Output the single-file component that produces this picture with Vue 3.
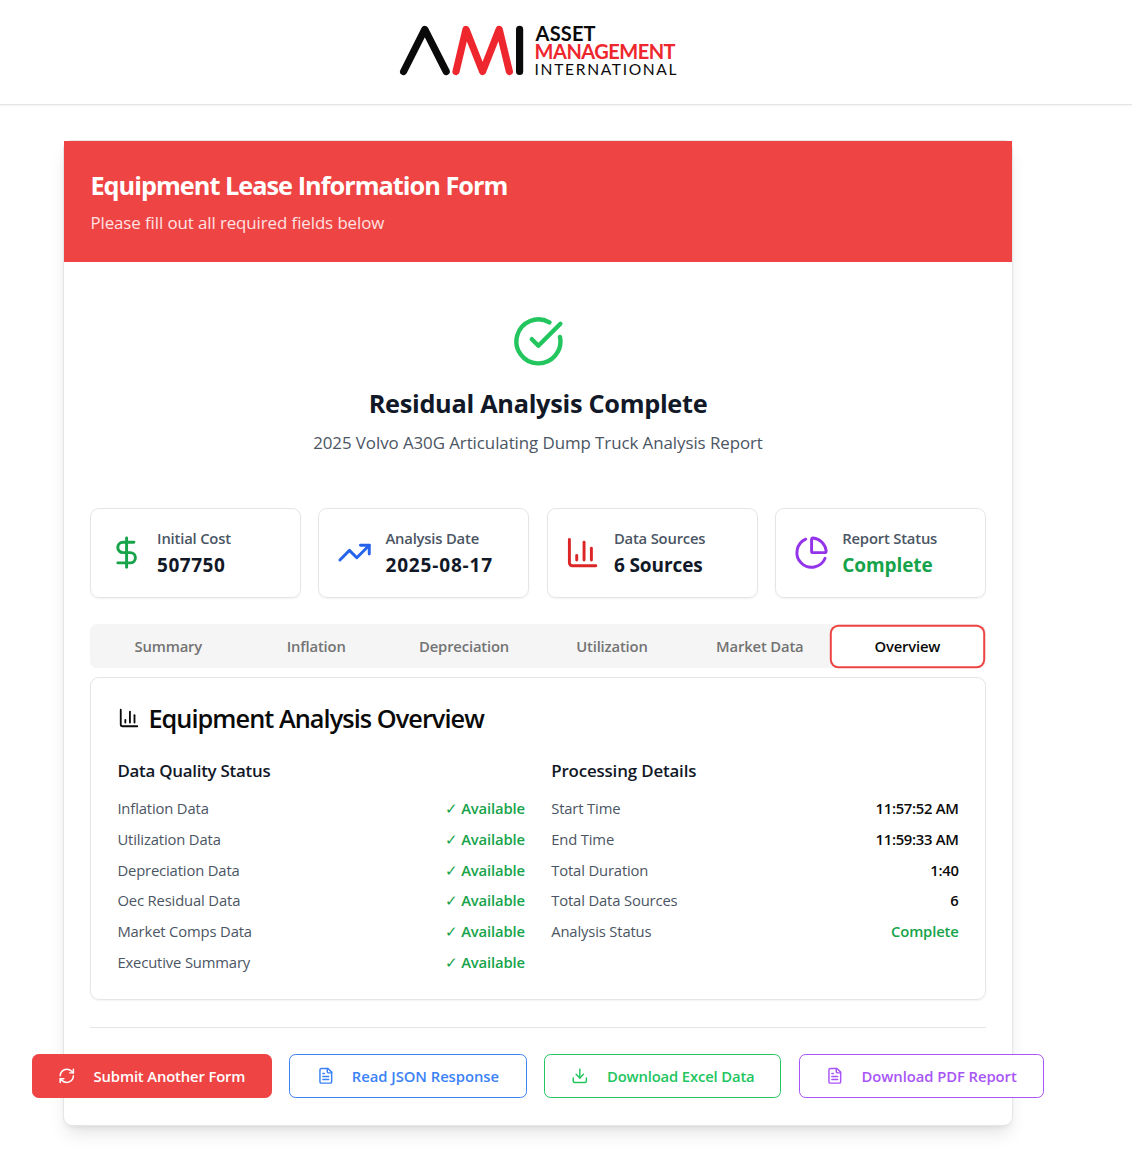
<script setup>
const icons = {
  check: ['M21.801 10A10 10 0 1 1 17 3.335', 'm9 11 3 3L22 4'],
  dollar: ['M12 2v20', 'M17 5H9.5a3.5 3.5 0 0 0 0 7h5a3.5 3.5 0 0 1 0 7H6'],
  trend: ['M22 7l-8.5 8.5-5-5L2 17', 'M16 7h6v6'],
  chart: ['M3 3v16a2 2 0 0 0 2 2h16', 'M18 17V9', 'M13 17V5', 'M8 17v-3'],
  pie: [
    'M21 12c.552 0 1.005-.449.95-.998a10 10 0 0 0-8.953-8.951c-.55-.055-.998.398-.998.95v8a1 1 0 0 0 1 1z',
    'M21.21 15.89A10 10 0 1 1 8 2.83',
  ],
  refresh: [
    'M3 12a9 9 0 0 1 9-9 9.75 9.75 0 0 1 6.74 2.74L21 8',
    'M21 3v5h-5',
    'M21 12a9 9 0 0 1-9 9 9.75 9.75 0 0 1-6.74-2.74L3 16',
    'M8 16H3v5',
  ],
  file: [
    'M15 2H6a2 2 0 0 0-2 2v16a2 2 0 0 0 2 2h12a2 2 0 0 0 2-2V7Z',
    'M14 2v4a2 2 0 0 0 2 2h4',
    'M10 9H8',
    'M16 13H8',
    'M16 17H8',
  ],
  download: ['M21 15v4a2 2 0 0 1-2 2H5a2 2 0 0 1-2-2v-4', 'M7 10l5 5 5-5', 'M12 15V3'],
}

const stats = [
  { label: 'Initial Cost', value: '507750', icon: 'dollar', tone: 'green', kind: 'digits' },
  { label: 'Analysis Date', value: '2025-08-17', icon: 'trend', tone: 'blue', kind: 'date' },
  { label: 'Data Sources', value: '6 Sources', icon: 'chart', tone: 'red', kind: '' },
  { label: 'Report Status', value: 'Complete', icon: 'pie', tone: 'purple', kind: 'good' },
]

const tabs = ['Summary', 'Inflation', 'Depreciation', 'Utilization', 'Market Data', 'Overview']
const activeTab = 'Overview'

const quality = [
  'Inflation Data',
  'Utilization Data',
  'Depreciation Data',
  'Oec Residual Data',
  'Market Comps Data',
  'Executive Summary',
]

const details = [
  { label: 'Start Time', value: '11:57:52 AM', kind: 'time' },
  { label: 'End Time', value: '11:59:33 AM', kind: 'time' },
  { label: 'Total Duration', value: '1:40', kind: 'time' },
  { label: 'Total Data Sources', value: '6', kind: '' },
  { label: 'Analysis Status', value: 'Complete', kind: 'good' },
]

const actions = [
  { label: 'Submit Another Form', icon: 'refresh', kind: 'submit' },
  { label: 'Read JSON Response', icon: 'file', kind: 'json' },
  { label: 'Download Excel Data', icon: 'download', kind: 'excel' },
  { label: 'Download PDF Report', icon: 'file', kind: 'pdf' },
]
</script>

<template>
  <div class="page">
    <header class="topbar">
      <svg class="logo" width="284" height="66" viewBox="398 18 284 66">
        <g fill="none" stroke-width="7.2" stroke-linecap="round" stroke-linejoin="round">
          <path stroke="#0b0a0b" d="M403.6 71.5 424.8 29.4 446.2 71.5" />
          <path stroke="#ee262d" d="M456 71.5 466 29.4 482.6 71.5 499.2 29.4 509.4 71.5" />
          <path stroke="#0b0a0b" d="M519.6 29.4V71.5" />
        </g>
        <g class="wordmark">
          <text x="535.6" y="40.8" font-size="20" font-weight="700" textLength="60" fill="#0b0a0b">ASSET</text>
          <text x="534.6" y="59.4" font-size="20" font-weight="700" textLength="141" fill="#ee262d">MANAGEMENT</text>
          <text x="534.6" y="74.8" font-size="15.6" font-weight="400" textLength="142" fill="#0b0a0b">INTERNATIONAL</text>
        </g>
      </svg>
    </header>

    <main class="card">
      <div class="banner">
        <h1>Equipment Lease Information Form</h1>
        <p>Please fill out all required fields below</p>
      </div>

      <div class="body">
        <section class="result">
          <svg class="icon result-icon" viewBox="0 0 24 24">
            <path v-for="d in icons.check" :key="d" :d="d" />
          </svg>
          <h2>Residual Analysis Complete</h2>
          <p>2025 Volvo A30G Articulating Dump Truck Analysis Report</p>
        </section>

        <section class="stats">
          <div v-for="s in stats" :key="s.label" class="stat">
            <svg class="icon stat-icon" :class="s.tone" viewBox="0 0 24 24">
              <path v-for="d in icons[s.icon]" :key="d" :d="d" />
            </svg>
            <div>
              <div class="stat-label">{{ s.label }}</div>
              <div class="stat-value" :class="s.kind">{{ s.value }}</div>
            </div>
          </div>
        </section>

        <nav class="tabs">
          <button v-for="t in tabs" :key="t" class="tab" :class="{ active: t === activeTab }">{{ t }}</button>
        </nav>

        <section class="panel">
          <h3>
            <svg class="icon panel-icon" viewBox="0 0 24 24">
              <path v-for="d in icons.chart" :key="d" :d="d" />
            </svg>
            <span>Equipment Analysis Overview</span>
          </h3>
          <div class="columns">
            <div>
              <h4 class="quality-title">Data Quality Status</h4>
              <div v-for="q in quality" :key="q" class="row">
                <span class="name">{{ q }}</span>
                <span class="value good"><span class="tick">✓</span>Available</span>
              </div>
            </div>
            <div>
              <h4>Processing Details</h4>
              <div v-for="d in details" :key="d.label" class="row">
                <span class="name">{{ d.label }}</span>
                <span class="value" :class="d.kind">{{ d.value }}</span>
              </div>
            </div>
          </div>
        </section>

        <footer class="actions">
          <button v-for="a in actions" :key="a.label" class="action" :class="a.kind">
            <svg class="icon action-icon" viewBox="0 0 24 24">
              <path v-for="d in icons[a.icon]" :key="d" :d="d" />
            </svg>
            <span>{{ a.label }}</span>
          </button>
        </footer>
      </div>
    </main>
  </div>
</template>

<style>
body {
  background: #fff;
}
</style>

<style scoped>
* {
  box-sizing: border-box;
}
.page {
  width: 1132px;
  height: 1174px;
  overflow: hidden;
  font-family: 'Open Sans', 'Noto Sans', sans-serif;
  font-size: 14.8px;
  color: #0a0a0a;
}
h1, h2, h3, h4, p {
  margin: 0;
}
button {
  font: inherit;
  border: 0;
  padding: 0;
  white-space: nowrap;
}
.icon {
  flex: none;
  fill: none;
  stroke: currentColor;
  stroke-width: 2;
  stroke-linecap: round;
  stroke-linejoin: round;
}
.topbar {
  height: 105px;
  padding: 18px 0 0 398px;
  border-bottom: 1px solid #e5e5e5;
  box-shadow: 0 1px 2px rgba(0, 0, 0, 0.05);
}
.logo {
  display: block;
}
.wordmark {
  font-family: Lato, sans-serif;
}
.card {
  width: 950px;
  height: 986px;
  margin: 35px 0 0 63px;
  border: 1px solid #e5e5e5;
  border-radius: 9px;
  background: #fff;
  box-shadow: 0 11px 16.5px -3.3px rgba(0, 0, 0, 0.1), 0 4.4px 6.6px -4.4px rgba(0, 0, 0, 0.1);
}
.banner {
  height: 121px;
  padding: 25.4px 26.4px 0;
  background: #ef4444;
  color: #fff;
}
.banner h1 {
  font-size: 25.3px;
  line-height: 38px;
  font-weight: 700;
  letter-spacing: -0.99px;
}
.banner p {
  margin-top: 5px;
  font-size: 16.9px;
  line-height: 28px;
  letter-spacing: -0.09px;
  color: #fee2e2;
}
.body {
  padding: 0 26px;
}
.result {
  display: flex;
  flex-direction: column;
  align-items: center;
  padding-top: 53px;
  height: 246px;
}
.result-icon {
  width: 52.8px;
  height: 52.8px;
  color: #22c55e;
}
.result h2 {
  margin-top: 17px;
  font-size: 25.3px;
  line-height: 36px;
  font-weight: 700;
  letter-spacing: -0.29px;
  color: #111827;
}
.result p {
  margin-top: 8px;
  font-size: 16.9px;
  line-height: 28px;
  letter-spacing: -0.07px;
  color: #4b5563;
}
.stats {
  display: grid;
  grid-template-columns: repeat(4, 1fr);
  gap: 17.6px;
}
.stat {
  display: flex;
  align-items: center;
  gap: 13.3px;
  height: 90px;
  padding: 0 17.6px;
  border: 1px solid #e5e5e5;
  border-radius: 8.8px;
  box-shadow: 0 1px 2px rgba(0, 0, 0, 0.05);
}
.stat-icon {
  width: 35.2px;
  height: 35.2px;
}
.green { color: #16a34a; }
.blue { color: #2563eb; }
.red { color: #dc2626; }
.purple { color: #9333ea; }
.stat-label {
  line-height: 22px;
  font-weight: 550;
  letter-spacing: -0.19px;
  color: #4b5563;
}
.stat-value {
  padding-top: 1px;
  font-size: 19px;
  line-height: 30px;
  font-weight: 700;
  letter-spacing: -0.09px;
  color: #111827;
}
.stat-value.digits { letter-spacing: 0.5px; }
.stat-value.date { letter-spacing: 0.83px; }
.stat-value.good { color: #16a34a; }
.tabs {
  display: grid;
  grid-template-columns: repeat(6, 1fr);
  height: 44px;
  margin-top: 26px;
  padding: 4.4px;
  border-radius: 6.6px;
  background: #f5f5f5;
}
.tab {
  border-radius: 4.4px;
  background: transparent;
  font-weight: 550;
  letter-spacing: -0.16px;
  color: #737373;
}
.tab.active {
  margin: 0.6px 0.6px -0.4px 0;
  background: #fff;
  color: #0a0a0a;
  box-shadow: 0 0 0 2.2px #fff, 0 0 0 4.2px #ef4444;
}
.panel {
  height: 323px;
  margin-top: 9px;
  padding: 21px 26.4px 0;
  border: 1px solid #e5e5e5;
  border-radius: 8.8px;
  box-shadow: 0 1px 2px rgba(0, 0, 0, 0.05);
}
.panel h3 {
  display: flex;
  align-items: center;
  gap: 8.6px;
  height: 38px;
  font-size: 25.3px;
  font-weight: 600;
  letter-spacing: -0.95px;
}
.panel-icon {
  width: 22px;
  height: 22px;
  margin-left: 0.4px;
}
.columns {
  display: grid;
  grid-template-columns: 1fr 1fr;
  gap: 26.4px;
  margin-top: 19px;
}
.columns h4 {
  height: 30px;
  margin-bottom: 7.1px;
  font-size: 16.9px;
  line-height: 29px;
  font-weight: 600;
  letter-spacing: -0.16px;
  color: #111827;
}
.columns .quality-title {
  letter-spacing: -0.25px;
}
.row {
  display: flex;
  justify-content: space-between;
  height: 30.75px;
  line-height: 30.75px;
}
.name {
  letter-spacing: -0.15px;
  color: #4b5563;
}
.value {
  font-weight: 600;
  letter-spacing: -0.15px;
}
.value.time {
  letter-spacing: -0.28px;
}
.value.good {
  color: #16a34a;
}
.tick {
  display: inline-block;
  width: 16px;
  font-weight: 400;
}
.actions {
  display: flex;
  gap: 17.6px;
  margin: 27px -58px 0;
  justify-content: flex-start;
  position: relative;
}
.actions::before {
  content: '';
  position: absolute;
  left: 58px;
  right: 58px;
  top: 0;
  border-top: 1px solid #e5e5e5;
}
.action {
  display: flex;
  align-items: center;
  flex: none;
  width: 237px;
  height: 44px;
  margin-top: 27px;
  padding-left: 26.4px;
  gap: 17.6px;
  border: 1px solid currentColor;
  border-radius: 6.6px;
  background: #fff;
  font-weight: 600;
  letter-spacing: -0.14px;
}
.action-icon {
  width: 17.6px;
  height: 17.6px;
}
.action.submit {
  width: 239.7px;
  padding-left: 25.4px;
  background: #ef4444;
  border-color: #ef4444;
  color: #fff;
}
.action.json { width: 237.5px; color: #3b82f6; letter-spacing: -0.04px; }
.action.excel { padding-left: 25.7px; gap: 18.3px; color: #22c55e; }
.action.pdf { width: 245px; padding-left: 25.7px; gap: 18.3px; color: #a855f7; letter-spacing: -0.06px; }
</style>
